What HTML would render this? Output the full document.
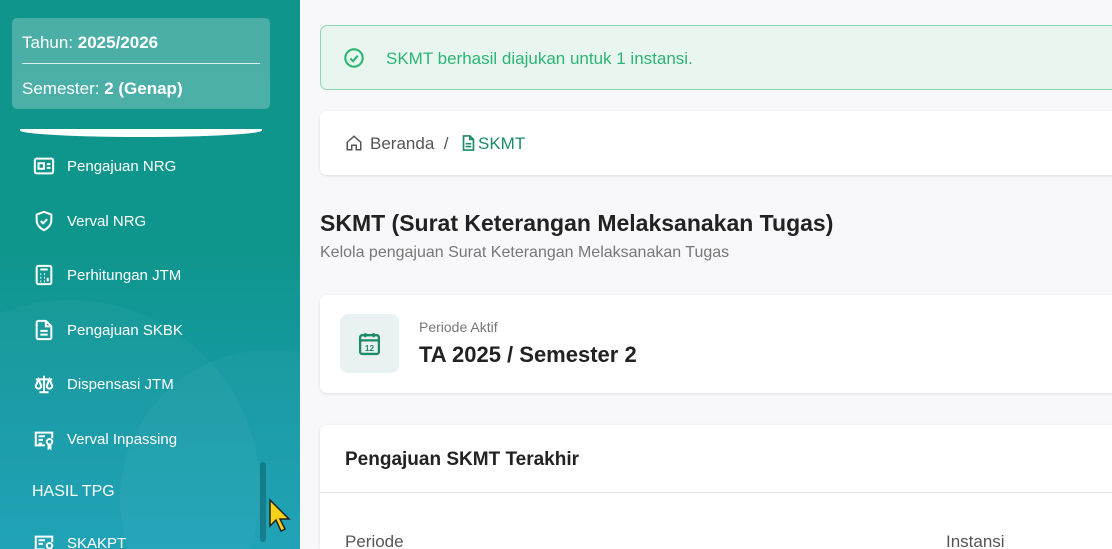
<!DOCTYPE html>
<html style="width:1112px;height:549px;overflow:hidden"><head><meta charset="utf-8"><style>
*{box-sizing:border-box;margin:0;padding:0}
body{width:1112px;height:549px;overflow:hidden;font-family:"Liberation Sans",sans-serif;background:#f8f8fa;position:relative}
.sb{position:absolute;left:0;top:0;width:300px;height:549px;background:linear-gradient(180deg,#0f958b 0%,#0f968c 45%,#1599a6 75%,#1aa0b5 100%);overflow:hidden}
.blob{position:absolute;border-radius:50%;background:rgba(255,255,255,0.03)}
.info{position:absolute;left:12px;top:18px;width:258px;height:91px;background:rgba(255,255,255,0.25);border-radius:5px;color:#fff;font-size:17px}
.info .r1{position:absolute;left:10px;top:15px}
.info .hr{position:absolute;left:10px;right:10px;top:45px;height:1px;background:rgba(255,255,255,0.8)}
.info .r2{position:absolute;left:10px;top:61px}
.curve{position:absolute;left:20px;top:129px;width:242px;height:8px;background:#fff;border-radius:0 0 60% 60%/0 0 100% 100%}
.item{position:absolute;left:33px;color:#fff;font-size:15px;display:flex;align-items:center}
.item svg{width:22px;height:22px;margin-right:12px}
.alert{position:absolute;left:320px;top:25px;width:800px;height:65px;background:#e9f6f0;border:1px solid #8fd6b4;border-radius:7px}
.alert span{position:absolute;left:65px;top:23px;color:#2bb573;font-size:17px}
.card{position:absolute;left:320px;width:800px;background:#fff;border-radius:7px;box-shadow:0 1px 3px rgba(0,0,0,0.1)}
</style></head><body>
<div class="sb">
<div class="blob" style="left:-120px;top:300px;width:380px;height:380px"></div>
<div class="blob" style="left:120px;top:350px;width:300px;height:300px"></div>
<div class="info"><div class="r1">Tahun: <b>2025/2026</b></div><div class="hr"></div><div class="r2">Semester: <b>2 (Genap)</b></div></div>
<div class="curve"></div>
<div class="item" style="top:155px"><svg viewBox="0 0 24 24" fill="none" stroke="#fff" stroke-width="2.2"><rect x="2" y="4" width="20" height="16" rx="2"/><rect x="6" y="9" width="6" height="6"/><path d="M15 10h4M15 14h4"/></svg>Pengajuan NRG</div>
<div class="item" style="top:210px"><svg viewBox="0 0 24 24" fill="none" stroke="#fff" stroke-width="2.2"><path d="M12 2l8 3v6c0 5-3.5 9-8 11-4.5-2-8-6-8-11V5z"/><path d="M8.5 12l2.5 2.5 4.5-4.5"/></svg>Verval NRG</div>
<div class="item" style="top:264px"><svg viewBox="0 0 24 24" fill="none" stroke="#fff" stroke-width="2.2"><rect x="4" y="2" width="16" height="20" rx="2"/><path d="M8 6h8M8 11h1M12 11h1M16 11h0M8 15h1M12 15h1M8 19h1M12 19h1M16 15v4"/></svg>Perhitungan JTM</div>
<div class="item" style="top:319px"><svg viewBox="0 0 24 24" fill="none" stroke="#fff" stroke-width="2.2"><path d="M14 2H6a2 2 0 0 0-2 2v16a2 2 0 0 0 2 2h12a2 2 0 0 0 2-2V8z"/><path d="M14 2v6h6M8 13h8M8 17h8"/></svg>Pengajuan SKBK</div>
<div class="item" style="top:373px"><svg viewBox="0 0 24 24" fill="none" stroke="#fff" stroke-width="2.2"><path d="M12 3v18M7 21h10M3 7h18M6 7l-3 7a3 3 0 0 0 6 0zM18 7l-3 7a3 3 0 0 0 6 0z"/></svg>Dispensasi JTM</div>
<div class="item" style="top:428px"><svg viewBox="0 0 24 24" fill="none" stroke="#fff" stroke-width="2.2"><path d="M13 19H3V5h18v6M6 9h7M6 13h5M6 17h4"/><circle cx="18" cy="15" r="3"/><path d="M17 18v4l1-1 1 1v-4"/></svg>Verval Inpassing</div>
<div style="position:absolute;left:32px;top:483px;color:#fff;font-size:16px">HASIL TPG</div>
<div class="item" style="top:532px"><svg viewBox="0 0 24 24" fill="none" stroke="#fff" stroke-width="2.2"><path d="M13 19H3V5h18v6M6 9h7M6 13h5"/><circle cx="18" cy="15" r="3"/></svg>SKAKPT</div>
<div style="position:absolute;left:260px;top:462px;width:6px;height:80px;background:rgba(0,60,70,0.35);border-radius:3px"></div>
<svg style="position:absolute;left:268px;top:498px" width="24" height="36" viewBox="0 0 24 36"><path d="M2 2v26l6-6 5 11 4-2-5-10h9z" fill="#f7d21a" stroke="#222" stroke-width="1.5"/></svg>
</div>
<div class="alert"><svg style="position:absolute;left:22px;top:21px" width="22" height="22" viewBox="0 0 24 24" fill="none" stroke="#2bb573" stroke-width="2.3"><circle cx="12" cy="12" r="9.5"/><path d="M8 12.5l3 3 5-6"/></svg><span>SKMT berhasil diajukan untuk 1 instansi.</span></div>
<div class="card" style="top:111px;height:64px"><svg style="position:absolute;left:25px;top:23px" width="18" height="18" viewBox="0 0 24 24" fill="none" stroke="#555" stroke-width="2"><path d="M3 11l9-8 9 8v10h-6v-6H9v6H3z"/></svg><span style="position:absolute;left:50px;top:23px;font-size:17px;color:#555">Beranda&nbsp;&nbsp;/</span><svg style="position:absolute;left:140px;top:23px" width="17" height="18" viewBox="0 0 24 24" fill="none" stroke="#1d8a6a" stroke-width="2.4"><path d="M14 2H5v20h14V7z"/><path d="M14 2v5h5M8 13h8M8 17h8"/></svg><span style="position:absolute;left:158px;top:23px;font-size:17px;color:#1d8a6a">SKMT</span></div>
<div style="position:absolute;left:320px;top:210px;font-size:23px;color:#222;font-weight:600">SKMT (Surat Keterangan Melaksanakan Tugas)</div>
<div style="position:absolute;left:320px;top:244px;font-size:16px;color:#777">Kelola pengajuan Surat Keterangan Melaksanakan Tugas</div>
<div class="card" style="top:295px;height:98px"><div style="position:absolute;left:20px;top:19px;width:59px;height:59px;background:#e9f1f2;border-radius:8px"></div><svg style="position:absolute;left:37px;top:36px" width="25" height="25" viewBox="0 0 24 24" fill="none" stroke="#1d8a6a" stroke-width="2.2"><rect x="3" y="4" width="18" height="18" rx="2"/><path d="M3 9h18M8 2v4M16 2v4"/><text x="12" y="19" font-size="8" text-anchor="middle" fill="#1d8a6a" stroke="none" font-family="Liberation Sans" font-weight="bold">12</text></svg><span style="position:absolute;left:99px;top:24px;font-size:14px;color:#777">Periode Aktif</span><span style="position:absolute;left:99px;top:47px;font-size:22px;color:#222;font-weight:600">TA 2025 / Semester 2</span></div>
<div class="card" style="top:425px;height:124px;border-radius:7px 7px 0 0"><span style="position:absolute;left:25px;top:24px;font-size:19px;color:#222;font-weight:600">Pengajuan SKMT Terakhir</span><div style="position:absolute;left:0;right:0;top:67px;height:1px;background:#e5e5e5"></div><span style="position:absolute;left:25px;top:107px;font-size:17px;color:#555">Periode</span><span style="position:absolute;left:626px;top:107px;font-size:17px;color:#555">Instansi</span></div>
</body></html>
